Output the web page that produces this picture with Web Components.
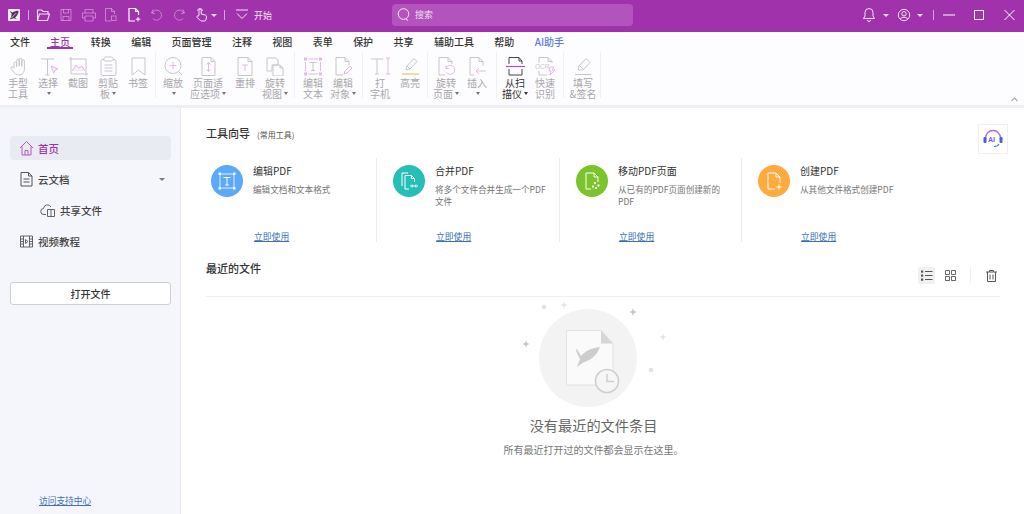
<!doctype html>
<html lang="zh"><head><meta charset="utf-8"><title>PDF</title>
<style>
html,body{margin:0;padding:0;height:514px;width:1024px;overflow:hidden;background:#fff;font-family:"Noto Sans CJK SC","Liberation Sans",sans-serif}
</style></head><body>
<app-shell></app-shell>
<script>
const svg=(w,h,body,extra='')=>`<svg width="${w}" height="${h}" viewBox="0 0 ${w} ${h}" fill="none" ${extra}>${body}</svg>`;
const G='#c9c5cd',P='#e0bbe6';
const RIB={
hand:`<path d="M6 12V7.500a1.300 1.300 0 012.600 0V11M8.600 10V4.500a1.300 1.300 0 012.600 0V10M11.200 10V3.600a1.300 1.300 0 012.600 0V10M13.800 10.500V5a1.300 1.300 0 012.600 0v8c0 3.500-2.400 6-5.500 6-3 0-4.300-1.500-5.500-3.500L3 12.500c-.8-1.300 1-2.300 2-1.200l1 1.200" stroke="${G}"/>`,
select:`<path d="M3 3h13M9.500 3v16M7.500 19h4" stroke="${G}"/><path d="M13 10l7 3-3 1.200-1.300 3z" stroke="${P}" fill="#f6ecf8"/>`,
shot:`<path d="M3 1v17h17" stroke="${G}"/><path d="M1 3h17v17" stroke="${G}"/><path d="M4 15l4-6 3 3 3-2 3 5" stroke="${P}" fill="#f6ecf8"/>`,
clip:`<rect x="3" y="3.500" width="15" height="16" rx="2" stroke="${G}"/><rect x="6" y="1" width="9" height="4" rx="1.500" stroke="${G}" fill="#fff"/><path d="M6.500 9h8M6.500 12h8M6.500 15h8" stroke="${G}"/>`,
mark:`<path d="M4 2h13v17l-6.500-5L4 19z" stroke="${G}"/>`,
zoom:`<circle cx="10" cy="9.500" r="8" stroke="${G}"/><path d="M15.500 15.500l3.500 3.500" stroke="${G}"/><path d="M10 6v7M6.500 9.500h7" stroke="${P}"/>`,
fit:`<path d="M4 1.500h9l4 4v14H4zM13 1.500v4h4" stroke="${G}"/><path d="M10.500 6.500v9M8.500 8.500l2-2 2 2M8.500 13.500l2 2 2-2" stroke="${P}"/>`,
reflow:`<path d="M3 1.500h10l4 4v14H3zM13 1.500v4h4" stroke="${G}"/><path d="M7 9h6M10 9v6" stroke="${P}"/>`,
rotv:`<path d="M2 2h9l2 2v5H7v6H2z" stroke="${G}"/><path d="M8 9h7l3 3v8H8z" stroke="${G}"/><path d="M15 9v3h3" stroke="${G}"/>`,
edtxt:`<path d="M5 3h10M5 18h10M2.500 6v9M17.500 6v9" stroke="${P}"/><g fill="${P}"><rect x="1" y="1.500" width="3" height="3"/><rect x="16" y="1.500" width="3" height="3"/><rect x="1" y="16.500" width="3" height="3"/><rect x="16" y="16.500" width="3" height="3"/></g><path d="M6.500 6.500h7M10 6.500v8M8 14.500h4" stroke="${G}"/>`,
edobj:`<path d="M10 19H3V1.500h9l4 4V9M12 1.500v4h4" stroke="${G}"/><path d="M11 18l1-3 5-5 2 2-5 5z" stroke="${P}"/>`,
type:`<path d="M1 3h12M7 3v15M5 18h4" stroke="${G}"/><path d="M16 2h4M18 2v16M16 18h4" stroke="${P}"/>`,
high:`<path d="M6 14l1-4L14 2.500l3 3L10 13z" stroke="${G}"/><path d="M7 10l3 3" stroke="${G}"/><path d="M2 18h17" stroke="#f0c36a" stroke-width="1.200"/>`,
rotp:`<path d="M9 19H3V1.500h9l4 4V8M12 1.500v4h4" stroke="${G}"/><path d="M10 12a4.500 4.500 0 11.500 4.500M10 9.500V12.500h3" stroke="${P}"/>`,
ins:`<path d="M7 19H3V1.500h9l4 4V10M12 1.500v4h4" stroke="${G}"/><path d="M19 15H9M12 12l-3 3 3 3" stroke="${P}"/>`,
scan:`<path d="M4 8V1.500h10l3 3.500v3M14 1.500V5h3M4 13v6h13v-6" stroke="#444"/><path d="M1 10.500h19" stroke="#b44fbf" stroke-width="1.200"/>`,
ocr:`<path d="M4 7V1.500h9l4 4V7M13 1.500v4h4M4 15v4h8" stroke="${G}"/><text x="0" y="13" font-family="Liberation Sans" font-size="6.500" fill="${G}" stroke="none">OCR</text><path d="M15 11l4 0-2 3h3l-5 5 1-4h-2z" stroke="${P}"/>`,
sign:`<path d="M5 14l1-4L13 2.500l4 4L10 14z" stroke="${G}"/><path d="M2 18.500h16" stroke="${G}"/><path d="M7 10l3 3" stroke="${P}"/>`
};
const TOOLS=[
['hand','手型|工具',30],['select','选择|▾',30],['shot','截图',30],['clip','剪贴|板▾',30],['mark','书签',30],'sep:2:2',
['zoom','缩放|▾',30],['fit','页面适|应选项▾',40],['reflow','重排',34],['rotv','旋转|视图▾',26],'sep:6:3',
['edtxt','编辑|文本',30],['edobj','编辑|对象▾',30],'sep:4:2',
['type','打|字机',30],['high','高亮',30],'sep:2:3',
['rotp','旋转|页面▾',30],['ins','插入|▾',32],'sep:3:3',
['scan','从扫|描仪▾',30,1],['ocr','快速|识别',30],'sep:3:2',
['sign','填写|&签名',34],'sep:0:0'];

class TitleBar extends HTMLElement{constructor(){super();const W='#f4e6f6',D='rgba(255,255,255,.38)';
const i=(w,b,ml)=>`<span class="i" style="margin-left:${ml}px;width:${w}px">${svg(w,16,b)}</span>`;
const caret=(ml,c='#f4e6f6')=>`<span class="caret" style="margin-left:${ml}px;border-top-color:${c}"></span>`;
const sep=(ml)=>`<span class="sep" style="margin-left:${ml}px"></span>`;
this.attachShadow({mode:'open'}).innerHTML=`<style>
:host{display:flex;align-items:center;height:32px;box-sizing:border-box;padding-bottom:2px;background:#a033ab;color:#fff;font:9px var(--cjk);position:relative}
.i{display:flex;align-items:center;flex:none}
.sep{width:1px;height:10px;background:rgba(255,255,255,.55);flex:none}
.caret{width:0;height:0;border:3px solid transparent;border-top:3.500px solid;border-bottom:0;flex:none}
.start{margin-left:5px;color:#f4e6f6}
.search{position:absolute;left:392px;top:4px;width:241px;height:22px;box-sizing:border-box;padding-bottom:1px;background:#b254bc;border-radius:4px;display:flex;align-items:center;color:#f0dff2}
.search svg{margin-left:5px;margin-right:5px}
.right{margin-left:auto;display:flex;align-items:center}
</style>
<span class="i" style="margin-left:8px;width:12px"><svg width="12" height="12" viewBox="0 0 12 12"><rect width="12" height="12" rx="1" fill="#f7eef8"/><path d="M1.500 1.800L4.500 3.600C6.300 2.300 8.500 1.800 10.500 1.800 10.500 4.500 9.300 7 7 8.500L9.200 10.300 5.700 9.200 2 10.500 3.200 7.600 3.700 4.800z" fill="#5c2a68"/><path d="M3.300 9l5-5" stroke="#f7eef8" stroke-width=".7"/></svg></span>
${sep(8)}
${i(14,`<path d="M1.500 13.500V3h4l1.500 1.500h5V7M1.500 13.500L3.500 7H13.500l-2 6.500z" stroke="${W}" stroke-width="1.100"/>`,7)}
${i(14,`<path d="M2 2.500h10v11H2zM4.500 2.500v3.500h5V2.500M4 13.500v-4h6v4" stroke="${D}"/>`,9)}
${i(16,`<path d="M4 6V2.500h8V6M4 11H1.500V6h13v5H12M4 9h8v5H4z" stroke="${D}"/>`,8)}
${i(14,`<path d="M8 14H2.500V1.500h6l3 3V7M8.500 1.500v3h3" stroke="${D}"/><rect x="8.500" y="9" width="4.500" height="4.500" stroke="${D}"/>`,6)}
${i(14,`<path d="M8 14H2V1.500h6.500l3 3V8M8.500 1.500v3h3" stroke="#fff" stroke-width="1.200"/><path d="M11 10v4.500M8.800 12.200h4.500" stroke="#fff"/>`,10)}
${i(12,`<path d="M3 2.500L1.500 6 5 6.500M2 6a5 5 0 11.800 5.500" stroke="${D}"/>`,9)}
${i(12,`<path d="M9 2.500L10.500 6 7 6.500M10 6a5 5 0 10-.800 5.500" stroke="${D}"/>`,12)}
${i(14,`<path d="M5 8V3.200a1.100 1.100 0 012.200 0V7l4 1c1 .3 1.500 1 1.300 2l-.6 3c-.2.800-.8 1-1.500 1H7.500c-.8 0-1.200-.4-1.600-1L3 10.500c-.7-1 .6-2 1.400-1.300z" stroke="${W}"/><path d="M3.500 4a2.500 2.500 0 015 0" stroke="${W}" stroke-width=".8"/>`,8)}
${caret(3)}
${sep(7)}
${i(14,`<path d="M1 3h12M2 6.500l5 5 5-5" stroke="${W}" stroke-width="1"/>`,10)}
<span class="start">开始</span>
<div class="search"><svg width="13" height="15" viewBox="0 0 13 15" fill="none"><circle cx="6.500" cy="7" r="5.300" stroke="#f4e6f6"/><path d="M9 12l2 1.500" stroke="#f4e6f6"/></svg><span>搜索</span></div>
<div class="right">
${i(14,`<path d="M7 1.500a4 4 0 00-4 4v3.500L1.500 11.500h11L11 9V5.500a4 4 0 00-4-4zM5.500 13a1.500 1.500 0 003 0" stroke="${W}"/>`,0)}
${caret(7)}
${i(14,`<circle cx="7" cy="8" r="5.700" stroke="${W}"/><circle cx="7" cy="6.800" r="2.200" stroke="${W}"/><path d="M3.300 12c1-2.200 6.400-2.200 7.400 0" stroke="${W}"/>`,8)}
${caret(6)}
${sep(10)}
${i(12,`<path d="M0 8h12" stroke="#fff"/>`,9)}
${i(10,`<rect x=".5" y="3.500" width="9" height="9" stroke="#fff"/>`,19)}
${i(11,`<path d="M.5 3l10 10M10.500 3l-10 10" stroke="#fff"/>`,20)}
<span style="width:9px"></span>
</div>`}}
customElements.define('title-bar',TitleBar);

class MenuTabs extends HTMLElement{constructor(){super();
const t=['文件','主页','转换','编辑','页面管理','注释','视图','表单','保护','共享','辅助工具','帮助','AI助手'];
this.attachShadow({mode:'open'}).innerHTML=`<style>
:host{display:flex;height:20px;background:#fdfdff;padding-left:10px;gap:20.400px;font:500 10px/20px var(--cjk);color:#333}
span{position:relative;white-space:nowrap}
.on{color:#a033ab;left:-.5px}
.on::after{content:"";position:absolute;left:-3px;right:-3px;top:15px;height:2px;background:#a033ab}
.ai{color:#5a7be8}
</style>`+t.map((x,i)=>`<span class="${i==1?'on':i==12?'ai':''}">${x}</span>`).join('')}}
customElements.define('menu-tabs',MenuTabs);

class RbTool extends HTMLElement{
connectedCallback(){if(this.shadowRoot)return;
const lines=this.getAttribute('label').split('|').map(l=>l.replace('▾','<i></i>'));
const dark=this.hasAttribute('dark');
this.attachShadow({mode:'open'}).innerHTML=`<style>
:host{display:flex;flex-direction:column;align-items:center;flex:none;height:53px;font:10px/11px var(--cjk);color:${dark?'#333':'#a8a6ab'}}
.ic{height:20px;margin-top:4px;margin-bottom:1px;display:flex}
div.l{white-space:nowrap;display:flex;align-items:center;justify-content:center;height:11px}
i{display:inline-block;width:0;height:0;border:2.500px solid transparent;border-top:3px solid ${dark?'#333':'#77747a'};border-bottom:0;margin-left:2px}
</style><div class="ic">${svg(21,20,RIB[this.getAttribute('icon')])}</div>${lines.map(l=>`<div class="l">${l}</div>`).join('')}`}}
customElements.define('rb-tool',RbTool);

class RibbonBar extends HTMLElement{constructor(){super();
const html=TOOLS.map(t=>{if(typeof t==='string'){const [,a,b]=t.split(':');return `<span class="s" style="margin:0 ${b}px 0 ${a}px"></span>`}
return `<rb-tool icon="${t[0]}" label="${t[1]}" style="width:${t[2]}px" ${t[3]?'dark':''}></rb-tool>`}).join('');
this.attachShadow({mode:'open'}).innerHTML=`<style>
:host{display:flex;height:53px;background:#fdfdff;padding-left:3px;position:relative;border-bottom:3px solid #eeeff4}
.s{width:1px;height:46px;margin-top:3px;background:#f0f0f4;flex:none}
.up{position:absolute;right:6px;bottom:3px;width:7px;height:5px}
</style>${html}<svg class="up" viewBox="0 0 7 5" fill="none"><path d="M.5 4L3.500 1 6.500 4" stroke="#aaa" stroke-width="1.200"/></svg>`}}
customElements.define('ribbon-bar',RibbonBar);

class SideItem extends HTMLElement{connectedCallback(){if(this.shadowRoot)return;
const on=this.hasAttribute('active'),ind=+(this.getAttribute('indent')||0);
this.attachShadow({mode:'open'}).innerHTML=`<style>
:host{display:flex;align-items:center;height:24px;border-radius:4px;padding-left:${9+ind}px;gap:${this.getAttribute('gap')||4}px;font:500 10.500px var(--cjk);color:${on?'#a033ab':'#444'};background:${on?'#e9ebf3':'transparent'}}
.car{margin-left:auto;margin-right:6px;width:0;height:0;border:3px solid transparent;border-top:3.500px solid #777;border-bottom:0}
slot[name=icon]{display:flex}
</style><slot name="icon"></slot><slot></slot>${this.hasAttribute('caret')?'<span class="car"></span>':''}`}}
customElements.define('side-item',SideItem);

class SideBar extends HTMLElement{constructor(){super();
this.attachShadow({mode:'open'}).innerHTML=`<style>
:host{display:flex;flex-direction:column;width:181px;flex:none;box-sizing:border-box;background:#f5f6fb;border-right:1px solid #e8e8ec;padding:28px 9px 0 10px;font-family:var(--cjk)}
.btn{margin-top:29px;height:23px;box-sizing:border-box;border:1px solid #cfcfd4;border-radius:3px;background:#fff;font:500 10px/21px var(--cjk);color:#333;text-align:center}
.link{margin-top:auto;margin-bottom:7px;margin-left:29px;font:8.700px/12px var(--cjk);color:#3d6fb4;text-decoration:underline;white-space:nowrap}
svg{display:block}
</style>
<side-item active>${'<span slot="icon">'+svg(15,16,'<path d="M1 8L7.500 1.500 14 8M3 6.500V15h9V6.500M6 15v-4.500h3V15" stroke="#b05cba" stroke-width="1"/>')+'</span>'}首页</side-item>
<side-item caret style="margin-top:7px"><span slot="icon">${svg(15,16,'<path d="M2 1.500h7.500L13 5v10H2zM9.500 1.500V5H13M4.500 8h6M4.500 11h6" stroke="#555"/>')}</span>云文档</side-item>
<side-item indent="21" gap="4" style="margin-top:7px"><span slot="icon">${svg(16,14,'<path d="M6 11.500H4a3 3 0 01-.5-6A4 4 0 0111 4M7.500 6.500h7v7h-7zM11 6.500v7" stroke="#555" stroke-width=".9"/>')}</span>共享文件</side-item>
<side-item style="margin-top:7px"><span slot="icon">${svg(15,13,'<path d="M1.500 1h12v11h-12zM4.500 1v11M10.500 1v11M1.500 4h3M1.500 6.500h3M1.500 9h3M10.500 4h3M10.500 6.500h3M10.500 9h3M6.500 4.500l2.500 2-2.500 2z" stroke="#555" stroke-width=".9"/>')}</span>视频教程</side-item>
<div class="btn">打开文件</div>
<div class="link">访问支持中心</div>`}}
customElements.define('side-bar',SideBar);

class GuideCard extends HTMLElement{connectedCallback(){if(this.shadowRoot)return;
this.attachShadow({mode:'open'}).innerHTML=`<style>
:host{display:grid;grid-template-columns:32px 1fr;column-gap:10px;box-sizing:border-box;height:84px;padding:7px 10px 0 5px;border-right:1px solid #ececee;font-family:var(--cjk)}
:host(:last-child){border-right:0}
.c{width:32px;height:32px;border-radius:50%;background:var(--c);display:flex;align-items:center;justify-content:center}
.t{display:flex;flex-direction:column;height:79px;margin-top:-1px}
h4{margin:0;font:400 10px/13px var(--cjk);color:#333}
p{margin:6px 0 0;font:8.600px/12px var(--cjk);color:#757575}
a{margin-top:auto;padding-left:1px;font:8.800px/12px var(--cjk);color:#3d6fb4;text-decoration:underline;align-self:flex-start}
</style><div class="c"><slot name="icon"></slot></div><div class="t"><h4>${this.getAttribute('name')}</h4><p>${this.getAttribute('desc')}</p><a>立即使用</a></div>`}}
customElements.define('guide-card',GuideCard);

class EmptyState extends HTMLElement{constructor(){super();
this.attachShadow({mode:'open'}).innerHTML=`<style>
:host{display:flex;flex-direction:column;align-items:center;font-family:var(--cjk);margin-right:19px}
h3{margin:3px 0 0;font:400 14.200px/20px var(--cjk);color:#666}
p{margin:7px 0 0;font:10px/15px var(--cjk);color:#777}
svg{display:block}
</style>
<svg width="170" height="115" viewBox="0 0 170 115" fill="none"><g transform="translate(-1 0)">
<circle cx="80" cy="61" r="49" fill="#f3f3f3"/>
<path d="M58.500 33.500h34.500l12 13v41.500H58.500z" fill="#fafafa" stroke="#e2e2e2"/>
<path d="M93 33.500l12 13H93z" fill="#d6d6d6"/>
<path d="M72 66c9-1 17-7 20-16-9 1-15 4-19 9l-4-7-1 1c1 4 3 7 4 9l-3 8 7-5z" fill="#cdcdcd"/>
<circle cx="99" cy="84" r="11.500" fill="#f6f6f6" stroke="#cfcfcf" stroke-width="1.600"/>
<path d="M99 77v7.500h7" stroke="#cfcfcf" stroke-width="1.500"/>
<g fill="#c4c4c4"><path d="M18 43.500l1 2.500 2.500 1-2.500 1-1 2.500-1-2.500-2.500-1 2.500-1zM125 11l1 3 3 1-3 1-1 3-1-3-3-1 3-1z"/></g>
<g fill="#e2e2e2"><path d="M56 4l.8 3 3 1-3 1-.8 3-.8-3-3-1 3-1zM155 36l.8 3 3 1-3 1-.8 3-.8-3-3-1 3-1z"/><circle cx="36" cy="10" r="2.300"/><circle cx="143" cy="73" r="2.300"/></g>
</g></svg>
<h3>没有最近的文件条目</h3><p>所有最近打开过的文件都会显示在这里。</p>`}}
customElements.define('empty-state',EmptyState);

class MainPane extends HTMLElement{constructor(){super();
const card=(n,d,c,ic)=>`<guide-card name="${n}" desc="${d}" style="--c:${c}"><span slot="icon" style="display:flex">${svg(20,20,ic)}</span></guide-card>`;
const W='#fff';
this.attachShadow({mode:'open'}).innerHTML=`<style>
:host{display:block;flex:1;position:relative;font-family:var(--cjk);padding:17px 24px 0 25px;background:#fff}
.h{display:flex;align-items:baseline;gap:7px;font:500 11px/16px var(--cjk);color:#333}
.h small{font:400 8px/12px var(--cjk);color:#555}
.ai{position:absolute;left:797px;top:16px;width:28px;height:28px;border:1px solid #f0f0f2;background:#fff;display:flex;align-items:center;justify-content:center}
.cards{display:grid;grid-template-columns:171px 183px 182px 1fr;margin-top:17px}
.cards guide-card:not(:first-child){padding-left:16px}
.recent{display:flex;align-items:flex-start;height:17px;margin-top:18px;font:500 11px/17px var(--cjk);color:#333}
.tb{margin-left:auto;display:flex;align-items:center;margin-top:7px}
.tb span{display:flex;width:17px;height:17px;align-items:center;justify-content:center;border-radius:2px}
.tb .on{background:#f0f0f2}
hr{border:0;height:1px;background:#efeff1;margin:19px 0 0}
</style>
<div class="h">工具向导<small>(常用工具)</small></div>
<div class="ai"><svg width="22" height="20" viewBox="0 0 22 20" fill="none"><path d="M3.500 10V9a7.500 7.500 0 0115 0v1" stroke="#a86ae8" stroke-width="1.300"/><rect x="1.500" y="8" width="3" height="6" rx="1.200" fill="#4a5fd8"/><rect x="17.500" y="8" width="3" height="6" rx="1.200" fill="#4a5fd8"/><path d="M17 15c-1 2-3 2.500-5 2.500" stroke="#4a7fe8" stroke-width="1.200"/><text x="6" y="13" font-family="Liberation Sans" font-size="7" font-weight="700" fill="#7a5ae0">AI</text></svg></div>
<div class="cards">
${card('编辑PDF','编辑文档和文本格式','#5aa9fb',`<path d="M4 3h12M4 17h12M3 4v12M17 4v12" stroke="${W}" stroke-width=".8"/><g fill="${W}"><rect x="1.500" y="1.500" width="2.500" height="2.500"/><rect x="16" y="1.500" width="2.500" height="2.500"/><rect x="1.500" y="16" width="2.500" height="2.500"/><rect x="16" y="16" width="2.500" height="2.500"/></g><path d="M6.500 6.500h7M10 6.500v7.500M8.200 14h3.600" stroke="${W}"/>`)}
${card('合并PDF','将多个文件合并生成一个PDF文件','#25bfb6',`<path d="M3 15V2h6M6 18V4.500h6.500l3 3V11M12.500 4.500v3h3M6 18h4" stroke="${W}"/><path d="M11 15h3M19 15h-3M13 13.500l1.500 1.500-1.500 1.500M17 13.500L15.500 15l1.500 1.500" stroke="${W}"/>`)}
${card('移动PDF页面','从已有的PDF页面创建新的PDF','#7bc42c',`<path d="M9 18H4V2h8l4 4v5M12 2v4h4" stroke="${W}"/><g fill="${W}"><rect x="12" y="11" width="2" height="2"/><rect x="15.500" y="13.500" width="2" height="2"/><rect x="10" y="14.500" width="2" height="2"/><rect x="13" y="16" width="2" height="2"/></g>`)}
${card('创建PDF','从其他文件格式创建PDF','#fdab3d',`<path d="M11 18H4V2h8l4 4v6M12 2v4h4" stroke="${W}"/><path d="M15 13.500v5M12.500 16h5" stroke="${W}"/>`)}
</div>
<div class="recent"><span>最近的文件</span>
<div class="tb"><span class="on">${svg(13,13,'<g fill="#555"><rect x="1" y="1.500" width="2.200" height="2.200"/><rect x="1" y="5.500" width="2.200" height="2.200"/><rect x="1" y="9.500" width="2.200" height="2.200"/></g><path d="M5 2.500h7.500M5 6.500h7.500M5 10.500h7.500" stroke="#555"/>')}</span>
<span style="margin-left:7.500px">${svg(13,13,'<path d="M1.500 1.500h4v4h-4zM7.500 1.500h4v4h-4zM1.500 7.500h4v4h-4zM7.500 7.500h4v4h-4z" stroke="#666"/>')}</span>
<i style="width:1px;height:15px;background:#eee;margin:0 12px 0 11px"></i>
<span>${svg(13,13,'<path d="M1 3h11M4.500 3V1.500h4V3M2.500 3v9.500h8V3M5 5.500v5M8 5.500v5" stroke="#555"/>')}</span></div></div>
<hr>
<empty-state></empty-state>`}}
customElements.define('main-pane',MainPane);

class AppShell extends HTMLElement{constructor(){super();
this.attachShadow({mode:'open'}).innerHTML=`<style>
:host{display:flex;flex-direction:column;width:1024px;height:514px;--cjk:"Noto Sans CJK SC","Liberation Sans",sans-serif}
.body{display:flex;flex:1;min-height:0}
</style><title-bar></title-bar><menu-tabs></menu-tabs><ribbon-bar></ribbon-bar><div class="body"><side-bar></side-bar><main-pane></main-pane></div>`}}
customElements.define('app-shell',AppShell);
</script></body></html>
